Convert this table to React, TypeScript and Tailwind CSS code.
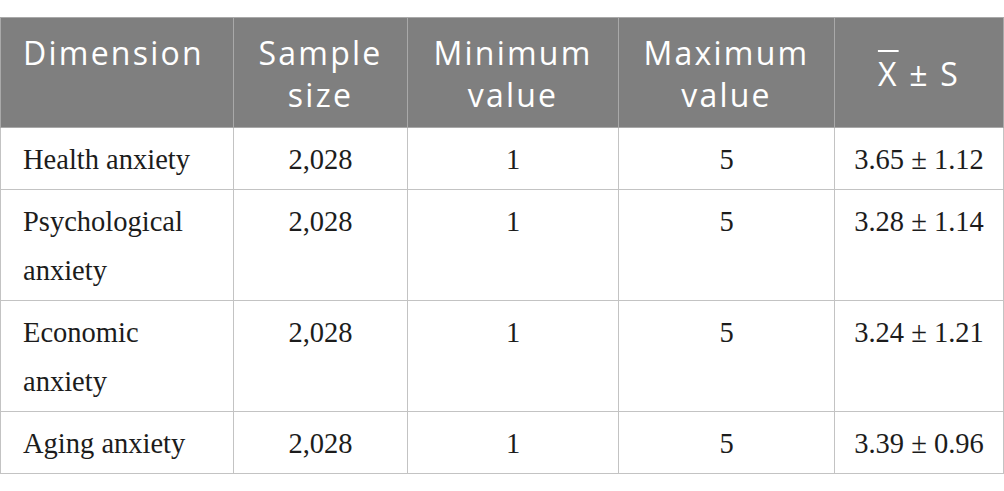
const rows = [
  { name: "Health anxiety", n: "2,028", min: "1", max: "5", mean: "3.65 ± 1.12" },
  { name: "Psychological anxiety", n: "2,028", min: "1", max: "5", mean: "3.28 ± 1.14" },
  { name: "Economic anxiety", n: "2,028", min: "1", max: "5", mean: "3.24 ± 1.21" },
  { name: "Aging anxiety", n: "2,028", min: "1", max: "5", mean: "3.39 ± 0.96" },
];

const th =
  "border border-[#a9a9a9] px-[10px] pt-[14px] pb-[11px] align-top text-[32px] font-normal leading-[42px] tracking-[0.07em] text-white";
const td =
  "border border-[#c3c3c3] pt-[7px] pb-[5px] align-top text-[28.5px] leading-[49px] text-[#1c1c1c]";

export default function App() {
  return (
    <div className="h-[491px] w-[1004px] bg-white pt-[17px]">
      <table className="w-[1003px] table-fixed border-collapse">
        <colgroup>
          <col className="w-[233px]" />
          <col className="w-[174px]" />
          <col className="w-[211px]" />
          <col className="w-[216px]" />
          <col className="w-[169px]" />
        </colgroup>
        <thead className="bg-[#7f7f7f] font-['Open_Sans',sans-serif]">
          <tr>
            <th className={th + " !px-[22px] text-left"}>Dimension</th>
            <th className={th + " text-center"}>Sample size</th>
            <th className={th + " text-center"}>Minimum value</th>
            <th className={th + " text-center"}>Maximum value</th>
            <th className={th + " !align-middle whitespace-nowrap text-center"}>
              <span className="overline decoration-[1.5px]">X</span> ± S
            </th>
          </tr>
        </thead>
        <tbody className="font-['Liberation_Serif',serif]">
          {rows.map((r) => (
            <tr key={r.name}>
              <td className={td + " px-[22px] text-left"}>{r.name}</td>
              <td className={td + " px-[10px] text-center"}>{r.n}</td>
              <td className={td + " px-[10px] text-center"}>{r.min}</td>
              <td className={td + " px-[10px] text-center"}>{r.max}</td>
              <td className={td + " whitespace-nowrap px-[6px] text-center"}>{r.mean}</td>
            </tr>
          ))}
        </tbody>
      </table>
    </div>
  );
}
